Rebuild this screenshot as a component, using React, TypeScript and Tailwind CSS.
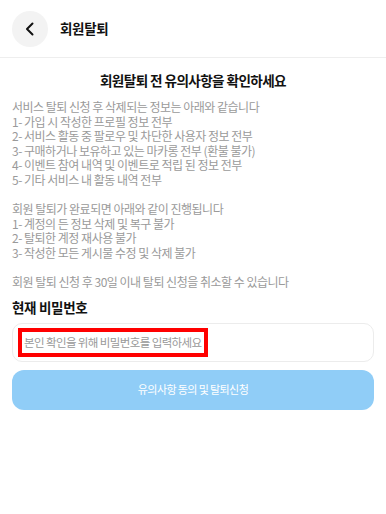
import React from "react";

const font = { fontFamily: '"Noto Sans CJK KR", "Noto Sans", sans-serif' };

export default function App() {
  return (
    <div className="w-[386px] h-[514px] bg-white flex flex-col" style={font}>
      <header className="flex items-center h-[58px] px-3 gap-3 border-b border-[#eeeeee]">
        <button className="w-9 h-9 rounded-full bg-[#f3f3f3] flex items-center justify-center">
          <svg width="16" height="16" viewBox="0 0 16 16" fill="none">
            <path d="M10.5 2.5 L5 8 L10.5 13.5" stroke="#111" strokeWidth="2" strokeLinecap="round" strokeLinejoin="round" />
          </svg>
        </button>
        <span className="text-[13.5px] font-semibold text-[#111] tracking-[-0.3px]">회원탈퇴</span>
      </header>
      <main className="flex flex-col px-3">
        <h1 className="mt-[12px] text-center text-[13.6px] font-bold text-[#111] tracking-[-0.6px] leading-[20px]">
          회원탈퇴 전 유의사항을 확인하세요
        </h1>
        <p className="mt-[10px] text-[12px] text-[#9a9a9a] leading-[14.6px] tracking-[-0.5px] whitespace-pre-line">
          {`서비스 탈퇴 신청 후 삭제되는 정보는 아래와 같습니다
1- 가입 시 작성한 프로필 정보 전부
2- 서비스 활동 중 팔로우 및 차단한 사용자 정보 전부
3- 구매하거나 보유하고 있는 마카롱 전부 (환불 불가)
4- 이벤트 참여 내역 및 이벤트로 적립 된 정보 전부
5- 기타 서비스 내 활동 내역 전부

회원 탈퇴가 완료되면 아래와 같이 진행됩니다
1- 계정의 든 정보 삭제 및 복구 불가
2- 탈퇴한 계정 재사용 불가
3- 작성한 모든 게시물 수정 및 삭제 불가

회원 탈퇴 신청 후 30일 이내 탈퇴 신청을 취소할 수 있습니다`}
        </p>
        <h2 className="mt-[7px] text-[13.5px] font-bold text-[#111] tracking-[-0.3px] leading-[20px]">현재 비밀번호</h2>
        <div className="mt-[6px] h-[39px] rounded-[10px] border border-[#ececec] flex items-center px-[5px]">
          <div className="border-[4px] border-[#ff0000] h-[29px] flex items-center px-[2px]">
            <span className="text-[11.5px] text-[#999] tracking-[-0.6px]">본인 확인을 위해 비밀번호를 입력하세요</span>
          </div>
        </div>
        <button className="mt-[8px] h-[40px] rounded-[12px] bg-[#90cdf7] flex items-center justify-center">
          <span className="text-[11px] text-white tracking-[-0.6px]">유의사항 동의 및 탈퇴신청</span>
        </button>
      </main>
    </div>
  );
}
